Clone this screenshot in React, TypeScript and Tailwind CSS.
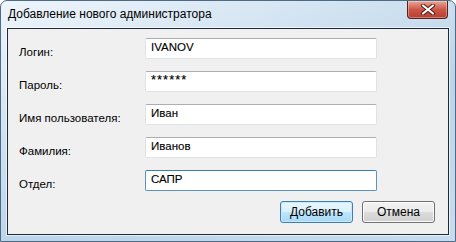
import React from 'react';

const rows = [
  { label: 'Логин:', value: 'IVANOV' },
  { label: 'Пароль:', value: '******', secret: true },
  { label: 'Имя пользователя:', value: 'Иван' },
  { label: 'Фамилия:', value: 'Иванов' },
  { label: 'Отдел:', value: 'САПР', focused: true },
];

const ui = { fontFamily: '"Liberation Sans", Arial, sans-serif' };

function CloseButton() {
  return (
    <div className="flex h-[18px] w-[41px] items-center justify-center rounded-b-[4px] border border-t-0 border-[#5a1d1d] bg-gradient-to-b from-[#eaa597] via-[#cc5646] to-[#b63d2c] shadow-[inset_0_0_0_1px_rgba(255,255,255,0.35)]">
      <svg width="14" height="11" viewBox="0 0 14 11">
        <path
          d="M2 1.5 L12 9.5 M12 1.5 L2 9.5"
          stroke="#4a1a14"
          strokeWidth="4"
          strokeLinecap="round"
        />
        <path
          d="M2 1.5 L12 9.5 M12 1.5 L2 9.5"
          stroke="#ffffff"
          strokeWidth="2.2"
          strokeLinecap="round"
        />
      </svg>
    </div>
  );
}

function Btn({ children, primary }: { children: React.ReactNode; primary?: boolean }) {
  return (
    <button
      type="button"
      style={ui}
      className={
        'h-[22px] w-[73px] rounded-[3px] border text-[12px] leading-none text-black ' +
        (primary
          ? 'border-[#3c7fb1] bg-[linear-gradient(to_bottom,#eaf6fd_0%,#d9f0fc_50%,#bee6fd_51%,#a7d9f5_100%)] shadow-[inset_0_0_0_1px_#c8e9fb]'
          : 'border-[#707070] bg-[linear-gradient(to_bottom,#f2f2f2_0%,#ebebeb_50%,#dddddd_51%,#cfcfcf_100%)] shadow-[inset_0_0_0_1px_#fcfcfc]')
      }
    >
      {children}
    </button>
  );
}

export default function App() {
  return (
    <div className="h-[242px] w-[456px] overflow-hidden bg-white">
      <div className="flex h-[242px] w-[456px] flex-col rounded-t-[7px] border border-[#4e6a84] bg-[linear-gradient(160deg,#eef5fb_0%,#d3e4f2_30%,#bcd5ea_60%,#c7dcee_100%)] px-[6px] pb-[6px]">
        <div className="flex h-[27px] items-start justify-between">
          <div style={ui} className="pl-[1px] pt-[4px] text-[12px] leading-[18px] text-black">
            Добавление нового администратора
          </div>
          <div className="mr-[1px]">
            <CloseButton />
          </div>
        </div>
        <div className="flex flex-1 flex-col border border-[#1f2a33] bg-[#f0f0f0] shadow-[0_0_0_1px_rgba(255,255,255,0.6)]">
          <div className="flex flex-col gap-[11px] pl-[11px] pt-[8px]">
            {rows.map((r) => (
              <div key={r.label} className="flex items-center">
                <div style={ui} className="w-[126px] pt-[8px] text-[11.5px] leading-[14px] text-black">
                  {r.label}
                </div>
                <div
                  style={ui}
                  className={
                    'flex h-[21px] w-[232px] items-center rounded-[2px] border bg-white pl-[5px] text-[11.5px] text-black [-webkit-text-stroke:0.12px_black] ' +
                    (r.focused
                      ? 'border-[#5c93bc] border-t-[#3d7bad]'
                      : 'border-[#dfe3e8] border-t-[#abadb3]')
                  }
                >
                  {r.secret ? (
                    <span className="-mt-[2px] text-[13px] tracking-[1px]">{r.value}</span>
                  ) : (
                    r.value
                  )}
                </div>
              </div>
            ))}
          </div>
          <div className="flex justify-end gap-[9px] pr-[13px] pt-[10px]">
            <Btn primary>Добавить</Btn>
            <Btn>Отмена</Btn>
          </div>
        </div>
      </div>
    </div>
  );
}
